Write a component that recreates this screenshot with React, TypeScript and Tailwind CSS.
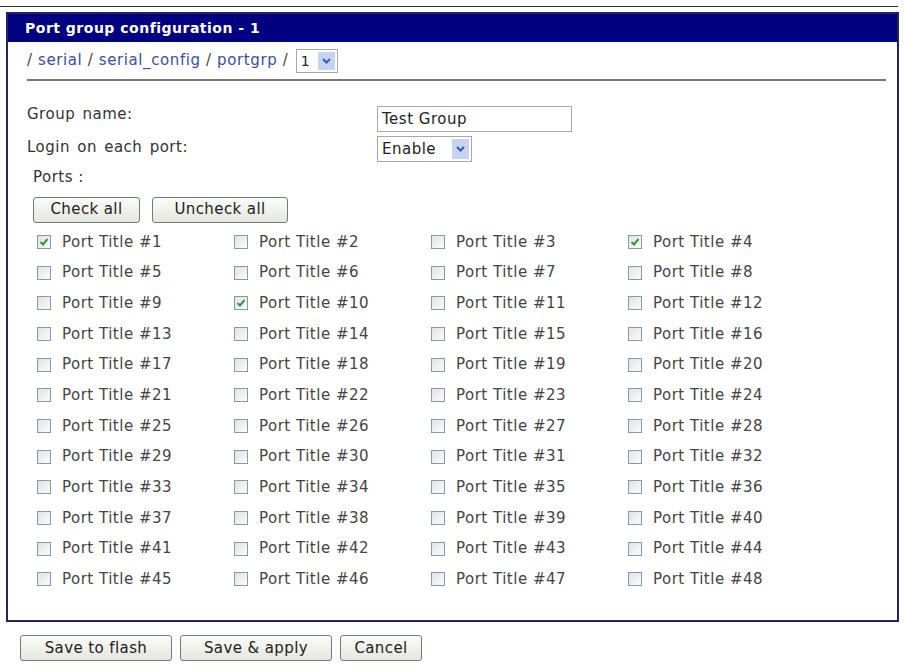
import React from "react";

const checked = new Set([1, 4, 10]);

function Box({ on }: { on: boolean }) {
  return (
    <span className="inline-flex h-[14px] w-[14px] shrink-0 items-center justify-center border border-[#8c98a4] bg-gradient-to-br from-[#dfe3e8] to-[#fbfbfb]">
      {on && (
        <svg width="10" height="10" viewBox="0 0 10 10">
          <path d="M1.5 5 L4 7.5 L8.5 2" fill="none" stroke="#2f9a3a" strokeWidth="2" />
        </svg>
      )}
    </span>
  );
}

function Btn({ children, w }: { children: React.ReactNode; w: string }) {
  return (
    <button
      className={`h-[26px] ${w} rounded-[3px] border border-[#707880] bg-gradient-to-b from-[#fbfbf8] to-[#e6e6e0] text-[15px] tracking-[0.4px] text-[#222] leading-none`}
    >
      {children}
    </button>
  );
}

function Arrow() {
  return (
    <span className="flex h-full w-[17px] items-center justify-center bg-[#c5d4f2]">
      <svg width="9" height="6" viewBox="0 0 9 6">
        <path d="M1 1 L4.5 4.5 L8 1" fill="none" stroke="#3d5ba8" strokeWidth="2" />
      </svg>
    </span>
  );
}

export default function App() {
  const ports = Array.from({ length: 48 }, (_, i) => i + 1);
  return (
    <div
      className="relative h-[668px] w-[904px] overflow-hidden bg-white text-[#333]"
      style={{ fontFamily: '"DejaVu Sans", Verdana, sans-serif' }}
    >
      <div className="mt-[6px] h-[1px] w-[898px] bg-[#333]" />
      <div className="ml-[6px] mt-[5px] h-[610px] w-[893px] border-2 border-[#23235e]">
        <div className="flex h-[28px] items-center bg-[#000080] px-[17px] text-[14px] font-bold tracking-[0.5px] text-white">
          Port group configuration - 1
        </div>
        <div className="px-[19px]">
          <div className="flex h-[37px] items-center text-[15px] tracking-[0.6px]">
            <span className="text-[#444]">/&nbsp;</span>
            <span className="text-[#3a4fa0]">serial</span>
            <span className="text-[#444]">&nbsp;/&nbsp;</span>
            <span className="text-[#3a4fa0]">serial_config</span>
            <span className="text-[#444]">&nbsp;/&nbsp;</span>
            <span className="text-[#3a4fa0]">portgrp</span>
            <span className="text-[#444]">&nbsp;/&nbsp;</span>
            <span className="ml-[2px] flex h-[24px] w-[42px] items-stretch border border-[#a8a8a8] bg-white p-[2px]">
              <span className="flex-1 pl-[2px] text-[14px] leading-[18px] text-[#222]">1</span>
              <Arrow />
            </span>
          </div>
          <div className="h-[2px] w-[859px] bg-[#777]" />
          <div className="mt-[25px] flex items-start text-[15px] tracking-[0.5px] [word-spacing:2px]">
            <span className="-mt-[3px] w-[350px]">Group name:</span>
            <span className="flex h-[26px] w-[195px] items-center border border-[#a8a8a8] px-[4px] text-[#222] [word-spacing:0px]">
              Test Group
            </span>
          </div>
          <div className="mt-[4px] flex items-start text-[15px] tracking-[0.5px] [word-spacing:2px]">
            <span className="w-[350px]">Login on each port:</span>
            <span className="flex h-[26px] w-[95px] items-stretch border border-[#a8a8a8] p-[2px] text-[#222]">
              <span className="flex flex-1 items-center pl-[2px]">Enable</span>
              <Arrow />
            </span>
          </div>
          <div className="mt-[4px] pl-[6px] text-[15px] tracking-[0.5px]">Ports :</div>
          <div className="mt-[8px] flex gap-[12px] pl-[6px]">
            <Btn w="w-[107px]">Check all</Btn>
            <Btn w="w-[136px]">Uncheck all</Btn>
          </div>
          <div className="mt-[4px] grid grid-cols-[197px_197px_197px_197px] pl-[10px]">
            {ports.map((n) => (
              <div key={n} className="flex h-[30.7px] items-center gap-[11px] text-[15px] tracking-[0.5px] text-[#444]">
                <Box on={checked.has(n)} />
                <span>Port Title #{n}</span>
              </div>
            ))}
          </div>
        </div>
      </div>
      <div className="mt-[13px] flex gap-[8px] pl-[20px]">
        <Btn w="w-[152px]">Save to flash</Btn>
        <Btn w="w-[152px]">Save &amp; apply</Btn>
        <Btn w="w-[82px]">Cancel</Btn>
      </div>
    </div>
  );
}
